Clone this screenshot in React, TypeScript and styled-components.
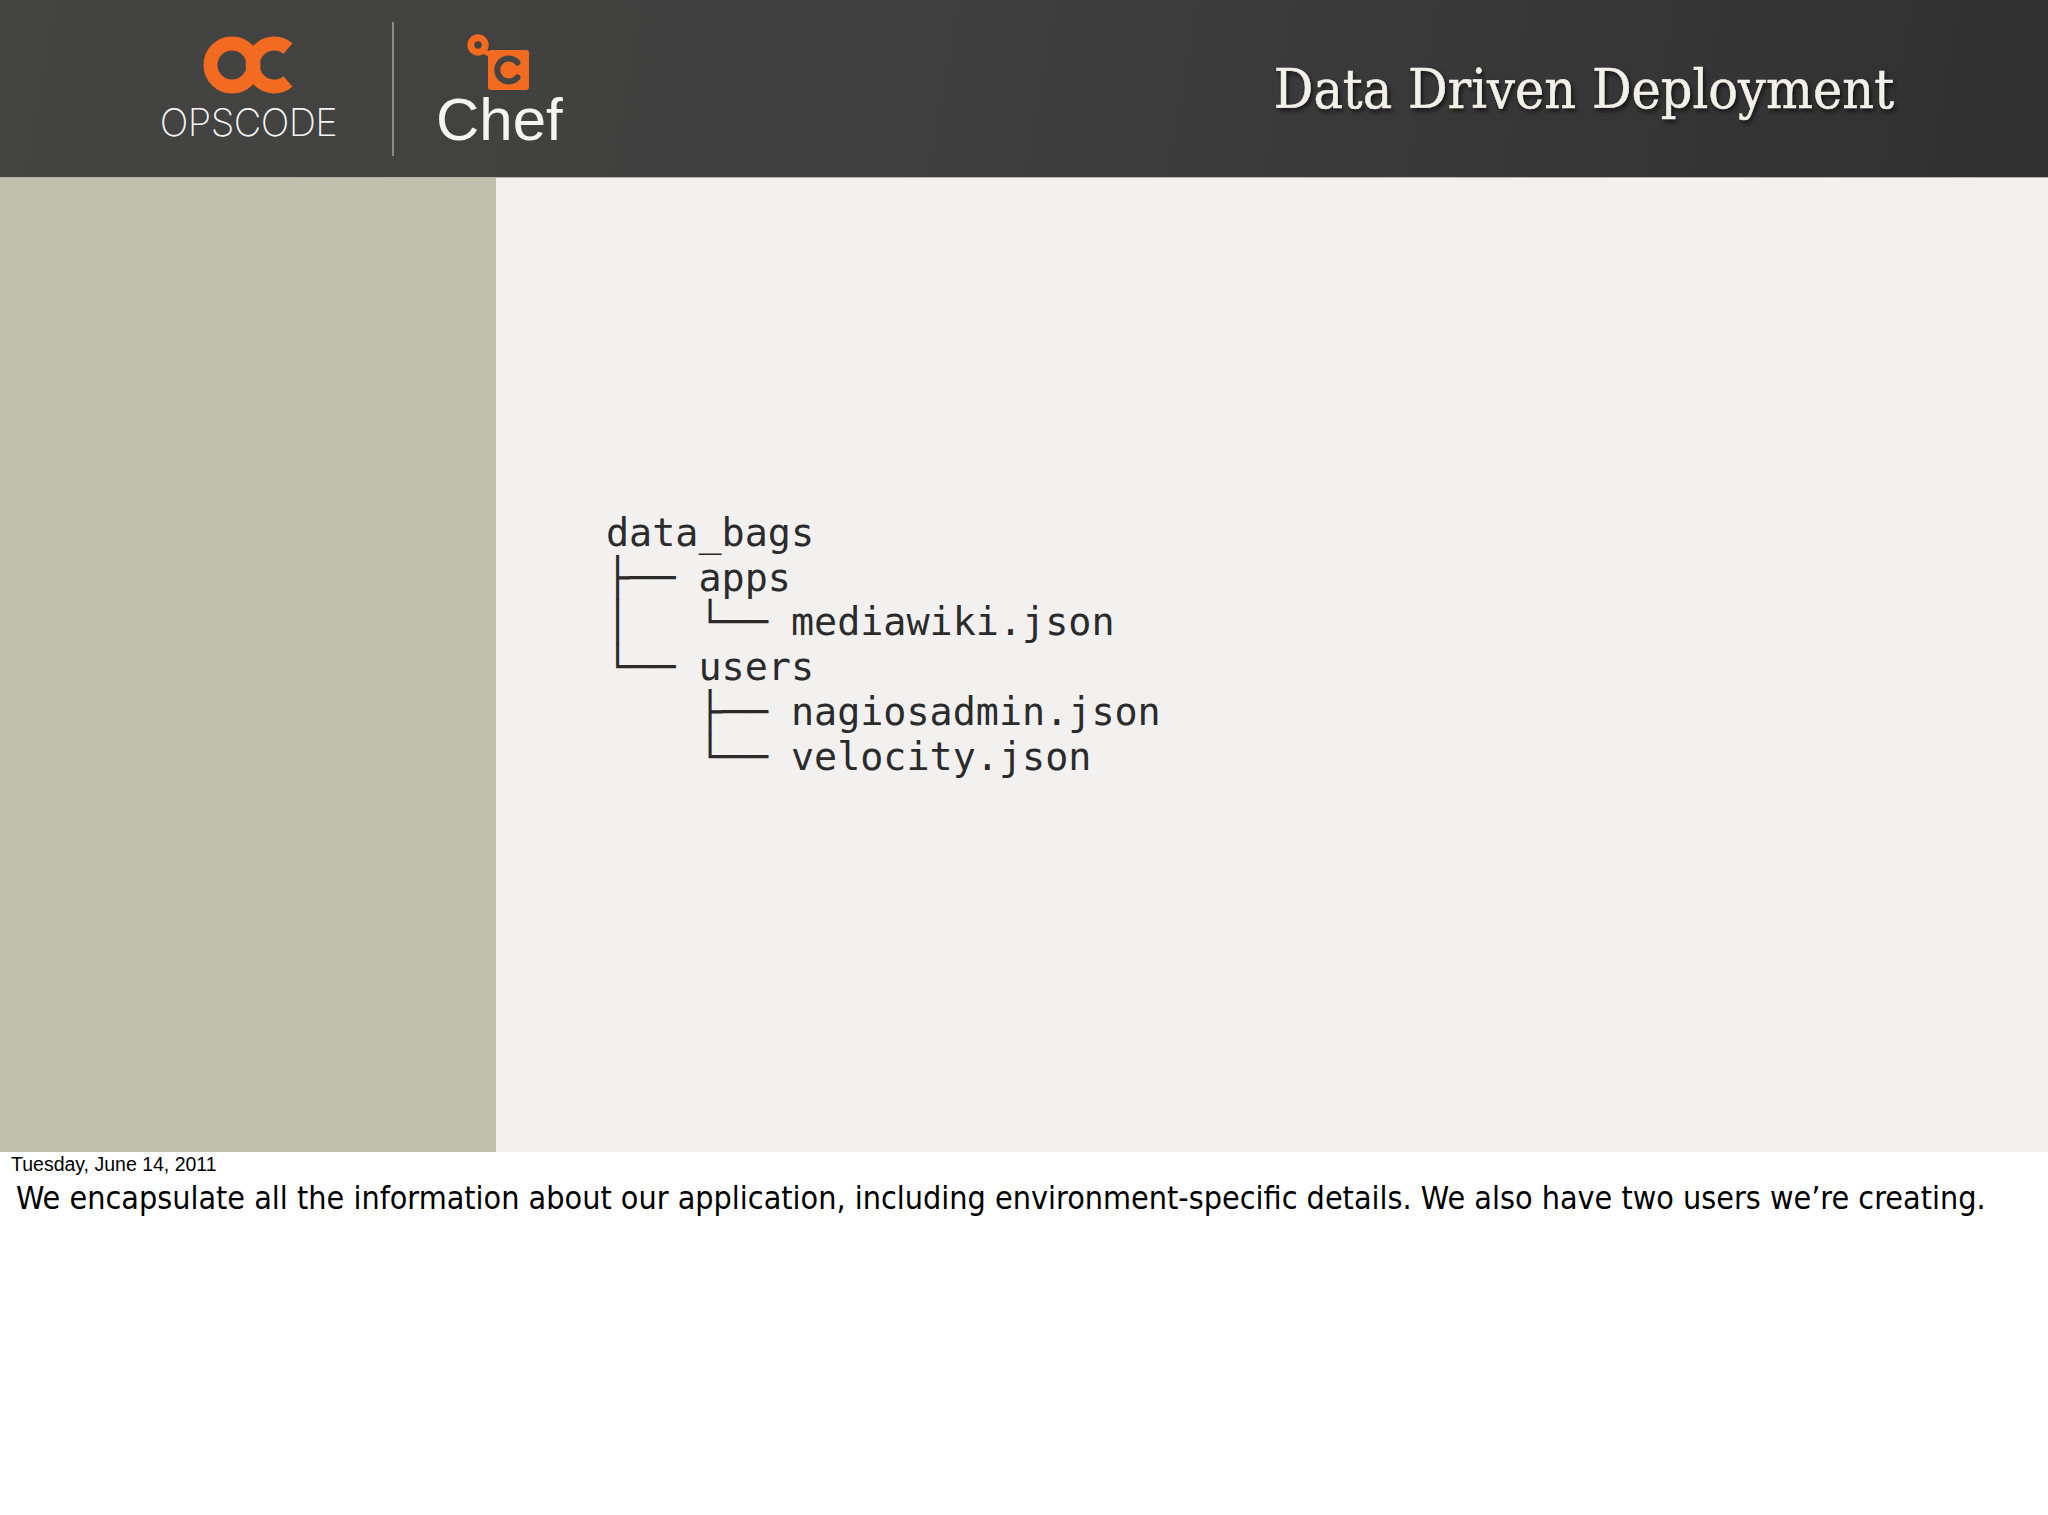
import React from 'react';
import styled, { createGlobalStyle } from 'styled-components';

const GlobalStyle = createGlobalStyle`
    html, body {
        margin: 0;
        padding: 0;
        background: #fff;
    }
`;

const Page = styled.div`
    width: 2048px;
    height: 1515px;
    overflow: hidden;
    display: flex;
    flex-direction: column;
`;

const Header = styled.header`
    height: 177px;
    flex: none;
    display: flex;
    align-items: center;
    justify-content: space-between;
    padding-right: 154px;
    background: linear-gradient(100deg, #444443 0%, #3e3f3e 45%, #2f302f 100%);
    border-bottom: 1px solid #b5b6a6;
`;

const Logos = styled.div`
    display: flex;
    align-items: center;
    height: 134px;
    margin-left: 147px;
`;

const Brand = styled.div`
    display: flex;
    flex-direction: column;
    align-items: center;
`;

const OpscodeBrand = styled(Brand)`
    width: 203px;
`;

const OpscodeName = styled.div`
    font-family: Inter, 'Liberation Sans', sans-serif;
    font-weight: 200;
    font-size: 38px;
    line-height: 38px;
    letter-spacing: -0.6px;
    color: #f4f4f2;
    margin-top: 9px;
`;

const Divider = styled.div`
    width: 2px;
    height: 134px;
    margin: 0 42px;
    background: #8b8b89;
`;

const ChefName = styled.div`
    font-family: 'Liberation Sans', Arial, sans-serif;
    font-size: 60px;
    line-height: 48px;
    letter-spacing: 0;
    color: #f4f4f2;
    margin-top: 2px;
`;

const Title = styled.h1`
    margin: 0;
    font-family: 'DejaVu Serif Condensed', 'DejaVu Serif', serif;
    font-weight: 400;
    font-size: 55px;
    color: #f1f1e9;
    text-shadow: 2px 3px 4px rgba(0, 0, 0, 0.7);
    -webkit-text-stroke: 0.5px #f1f1e9;
`;

const Slide = styled.div`
    height: 974px;
    flex: none;
    display: flex;
`;

const Sidebar = styled.aside`
    width: 496px;
    flex: none;
    background: #bfc0ae;
`;

const Main = styled.main`
    flex: 1;
    padding: 333px 0 0 110px;
    background: #f2f1f0;
`;

const Tree = styled.pre`
    margin: 0;
    font-family: 'DejaVu Sans Mono', monospace;
    font-size: 38.4px;
    line-height: 44.7px;
    color: #2b2b2b;
`;

const DateLine = styled.div`
    font-family: 'Liberation Sans', Arial, sans-serif;
    font-size: 19.5px;
    line-height: 24px;
    color: #000;
    padding: 0 0 0 11px;
`;

const Notes = styled.p`
    margin: 0;
    padding: 4px 16px 0;
    font-family: 'DejaVu Sans Condensed', 'DejaVu Sans', sans-serif;
    font-size: 32px;
    line-height: 37px;
    color: #000;
`;

const OpscodeMark = () => (
    <svg width='92' height='58' viewBox='0 0 92 58' aria-hidden='true'>
        <circle cx='29' cy='29' r='21.5' fill='none' stroke='#f36a21' strokeWidth='14' />
        <path
            d='M86 12.5 A21.5 21.5 0 1 0 86 45.5'
            fill='none'
            stroke='#f36a21'
            strokeWidth='14'
            transform='translate(-1 0)'
        />
    </svg>
);

const ChefMark = () => (
    <svg width='64' height='60' viewBox='0 0 64 60' aria-hidden='true'>
        <path d='M14 16 L30 24' stroke='#f36a21' strokeWidth='5' fill='none' />
        <circle cx='11' cy='11' r='7.2' fill='none' stroke='#f36a21' strokeWidth='7' />
        <rect x='21' y='16' width='41' height='40' rx='3' fill='#f36a21' />
        <path
            d='M50.5 28.5 A11.5 11.5 0 1 0 50.5 43.5'
            fill='none'
            stroke='#444443'
            strokeWidth='6'
            strokeLinecap='round'
        />
    </svg>
);

const tree = `data_bags
├── apps
│   └── mediawiki.json
└── users
    ├── nagiosadmin.json
    └── velocity.json`;

const App: React.FC = () => {
    return (
        <Page>
            <GlobalStyle />
            <Header>
                <Logos>
                    <OpscodeBrand>
                        <OpscodeMark />
                        <OpscodeName>OPSCODE</OpscodeName>
                    </OpscodeBrand>
                    <Divider />
                    <Brand>
                        <ChefMark />
                        <ChefName>Chef</ChefName>
                    </Brand>
                </Logos>
                <Title>Data Driven Deployment</Title>
            </Header>
            <Slide>
                <Sidebar />
                <Main>
                    <Tree>{tree}</Tree>
                </Main>
            </Slide>
            <DateLine>Tuesday, June 14, 2011</DateLine>
            <Notes>
                We encapsulate all the information about our application, including
                environment-specific details. We also have two users we’re creating.
            </Notes>
        </Page>
    );
};

export default App;
